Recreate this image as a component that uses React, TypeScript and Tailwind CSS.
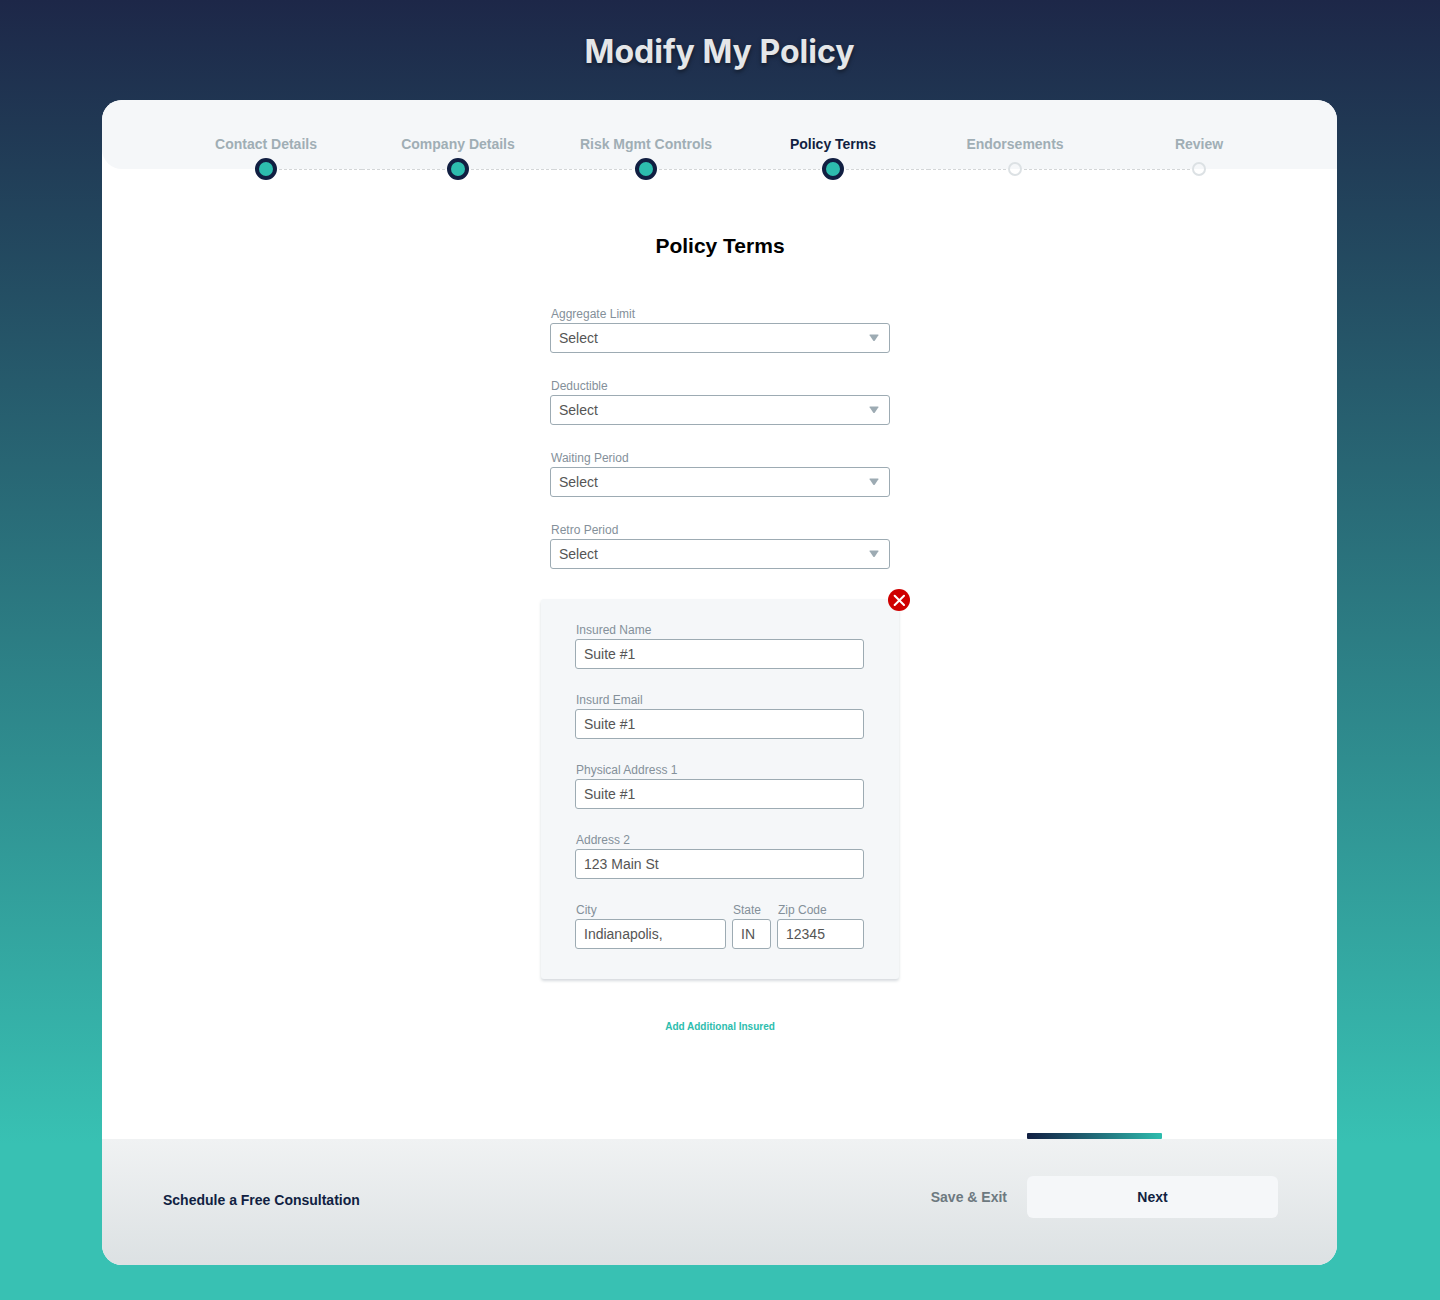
import { useState } from 'react';

type StepState = 'done' | 'current' | 'todo';

const steps: { label: string; state: StepState }[] = [
  { label: 'Contact Details', state: 'done' },
  { label: 'Company Details', state: 'done' },
  { label: 'Risk Mgmt Controls', state: 'done' },
  { label: 'Policy Terms', state: 'current' },
  { label: 'Endorsements', state: 'todo' },
  { label: 'Review', state: 'todo' },
];

const terms = [
  { id: 'aggregate', label: 'Aggregate Limit' },
  { id: 'deductible', label: 'Deductible' },
  { id: 'waiting', label: 'Waiting Period' },
  { id: 'retro', label: 'Retro Period' },
];

const insuredFields = [
  { id: 'name', label: 'Insured Name', value: 'Suite #1' },
  { id: 'email', label: 'Insurd Email', value: 'Suite #1' },
  { id: 'address1', label: 'Physical Address 1', value: 'Suite #1' },
  { id: 'address2', label: 'Address 2', value: '123 Main St' },
];

function Dashes({ hidden }: { hidden: boolean }) {
  return (
    <span
      className={`h-px flex-1 ${hidden ? '' : 'bg-[repeating-linear-gradient(90deg,#d3d6d8_0,#d3d6d8_3px,transparent_3px,transparent_5px)]'}`}
    />
  );
}

function Step({ label, state, index }: { label: string; state: StepState; index: number }) {
  return (
    <li className="flex flex-col items-center">
      <span className={`text-sm leading-5 font-bold whitespace-nowrap ${state === 'current' ? 'text-[#111f42]' : 'text-[#a0aeb5]'}`}>
        {label}
      </span>
      <div className="mt-1 flex h-[22px] w-full items-center gap-[2px]">
        <Dashes hidden={index === 0} />
        {state === 'todo' ? (
          <span className="size-[14px] rounded-full border-2 border-[#dce1e4]" />
        ) : (
          <span className="size-[22px] rounded-full border-4 border-[#111f42] bg-[#2dbdae]" />
        )}
        <Dashes hidden={index === steps.length - 1} />
      </div>
    </li>
  );
}

function SelectField({ id, label }: { id: string; label: string }) {
  return (
    <div>
      <label htmlFor={id} className="block pl-px text-xs leading-[18px] text-[#84909a]">{label}</label>
      <div className="relative">
        <select
          id={id}
          className="block h-[30px] w-full appearance-none rounded-[3px] border border-[#9dabb3] bg-white px-2 text-sm text-[#555]"
        >
          <option>Select</option>
        </select>
        <svg viewBox="0 0 10 8" className="pointer-events-none absolute top-[11px] right-[11px] h-2 w-[10px] fill-[#9dabb3]">
          <path d="M1 0.5H9Q9.8 0.5 9.4 1.3L5.9 6.6Q5 7.6 4.1 6.6L0.6 1.3Q0.2 0.5 1 0.5Z" />
        </svg>
      </div>
    </div>
  );
}

function TextField({ id, label, value }: { id: string; label: string; value: string }) {
  return (
    <div className="min-w-0">
      <label htmlFor={id} className="block pl-px text-xs leading-[18px] whitespace-nowrap text-[#84909a]">{label}</label>
      <input
        id={id}
        type="text"
        defaultValue={value}
        className="block h-[30px] w-full rounded-[3px] border border-[#9dabb3] bg-white px-2 text-sm text-[#555]"
      />
    </div>
  );
}

export default function App() {
  const [showInsured, setShowInsured] = useState(true);

  return (
    <div className="flex min-h-screen flex-col bg-[linear-gradient(180deg,#1d2748_0%,#38c1b3_88%)] pr-[103px] pb-[35px] pl-[102px] font-['Liberation_Sans',Arial,sans-serif]">
      <h1 className="flex h-[100px] items-center justify-center pt-1 text-center font-['Inter',sans-serif] text-[32px] leading-10 font-bold text-[#e4e6e8] [text-shadow:0_2px_4px_rgba(0,0,0,0.5)]">
        Modify My Policy
      </h1>

      <main className="flex flex-1 flex-col overflow-hidden rounded-[20px] bg-white">
        <header className="h-[69px] rounded-bl-[20px] bg-[#f5f7f9] pt-[34px] pr-[41px] pl-[68px]">
          <ol className="grid grid-cols-[192fr_192fr_184fr_190fr_174fr_194fr]">
            {steps.map((step, i) => (
              <Step key={step.label} index={i} label={step.label} state={step.state} />
            ))}
          </ol>
        </header>

        <form className="flex flex-1 flex-col items-center pt-[61px] pb-[104px] pl-px" onSubmit={(e) => e.preventDefault()}>
          <h2 className="text-[21px] leading-8 font-bold text-black">Policy Terms</h2>

          <div className="mt-[43px] flex w-full max-w-[340px] flex-col gap-6">
            {terms.map((term) => (
              <SelectField key={term.id} id={term.id} label={term.label} />
            ))}
          </div>

          {showInsured && (
            <section className="relative mt-[30px] w-full max-w-[358px] rounded-[3px] bg-[#f5f7f9] pt-[22px] pr-[35px] pb-[30px] pl-[34px] shadow-[0_2px_3px_rgba(30,50,70,0.18)]">
              <button
                type="button"
                aria-label="Remove insured"
                onClick={() => setShowInsured(false)}
                className="absolute -top-[10px] -right-[11px] flex size-[22px] items-center justify-center rounded-full bg-[#cf0000]"
              >
                <svg viewBox="0 0 12 12" className="size-3 stroke-white" fill="none" strokeWidth="2" strokeLinecap="round">
                  <path d="M1.7 1.7L11 11M11 1.7L1.7 11" />
                </svg>
              </button>
              <div className="flex flex-col gap-[22px]">
                {insuredFields.map((field) => (
                  <TextField key={field.id} id={field.id} label={field.label} value={field.value} />
                ))}
                <div className="grid grid-cols-[1fr_39px_87px] gap-[6px]">
                  <TextField id="city" label="City" value="Indianapolis," />
                  <TextField id="state" label="State" value="IN" />
                  <TextField id="zip" label="Zip Code" value="12345" />
                </div>
              </div>
            </section>
          )}

          <button type="button" onClick={() => setShowInsured(true)} className="mt-10 text-[10px] leading-4 font-bold text-[#2dbdae]">
            Add Additional Insured
          </button>
        </form>

        <footer className="relative flex h-[126px] items-start justify-between bg-linear-to-b from-[#f0f2f3] to-[#dce1e3] pt-[37px] pr-[59px] pl-[61px]">
          {/* progress marker resting on the footer edge */}
          <span className="absolute -top-[6px] right-[175px] h-[6px] w-[135px] rounded-[1px] bg-linear-to-r from-[#111f42] to-[#2dbdae]" />
          <a href="#" className="mt-[14px] text-sm leading-5 font-bold text-[#111f42]">Schedule a Free Consultation</a>
          <div className="flex items-center gap-5">
            <button type="button" className="text-sm leading-5 font-bold text-[#6d7980]">Save &amp; Exit</button>
            <button type="button" className="h-[42px] w-[251px] rounded-md bg-[#f5f7f9] text-sm font-bold text-[#111f42]">Next</button>
          </div>
        </footer>
      </main>
    </div>
  );
}
